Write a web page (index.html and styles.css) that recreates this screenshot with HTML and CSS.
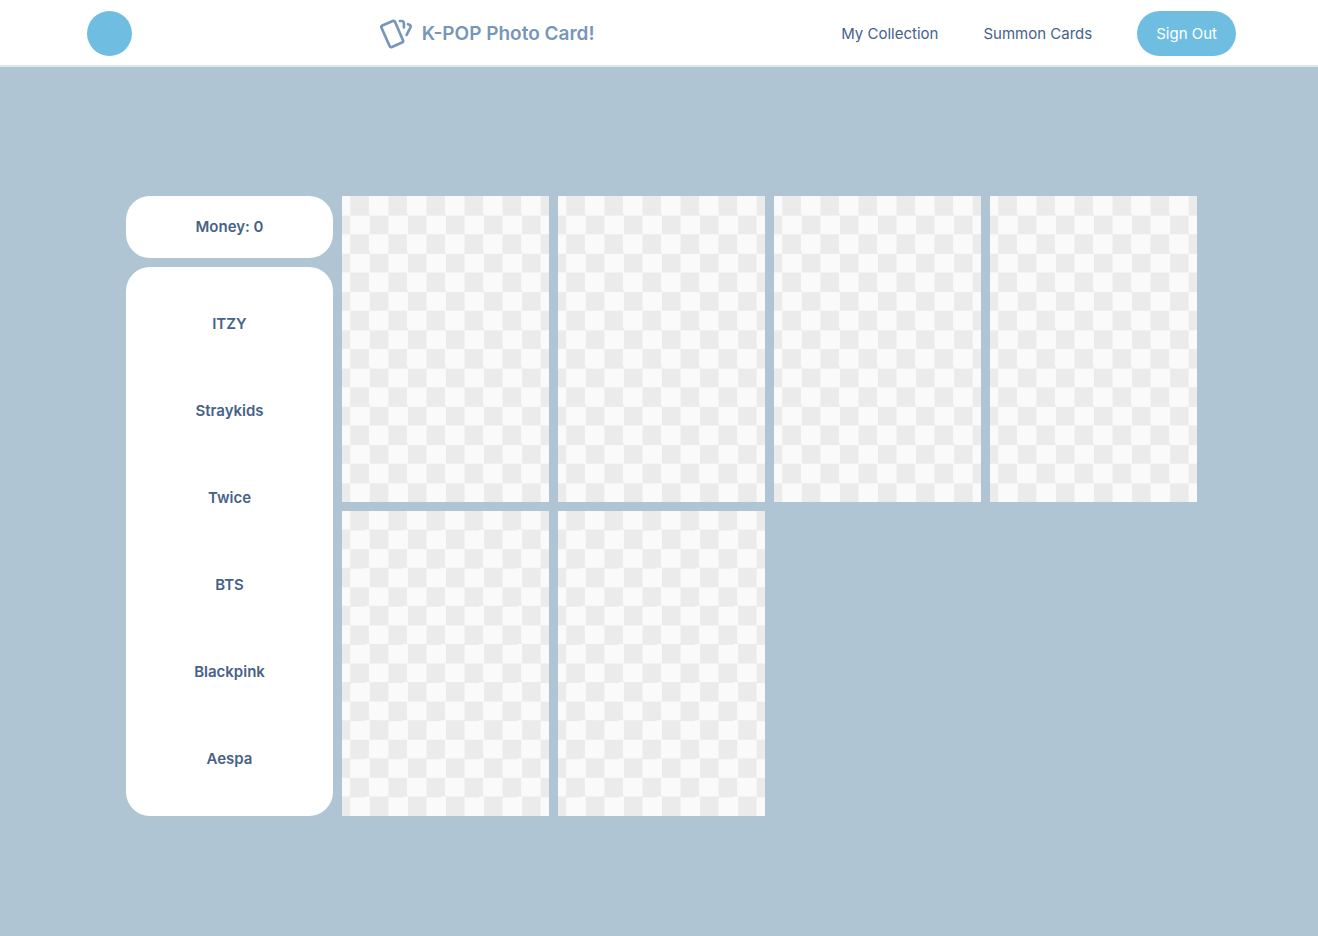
FILE: index.html
```html
<!DOCTYPE html>
<html lang="en">
<head>
<meta charset="utf-8">
<meta name="viewport" content="width=device-width, initial-scale=1">
<title>K-POP Photo Card!</title>
<link rel="stylesheet" href="styles.css">
</head>
<body>
<header class="header">
  <div class="avatar"></div>
  <a class="brand" href="#">
    <svg class="brand-icon" viewBox="0 0 34 32" aria-hidden="true">
      <path d="M3.4 7.4 L13.8 3 Q15.4 2.4 16.1 4 L24 22.3 Q24.6 23.9 23 24.6 L12.9 29 Q11.3 29.6 10.6 28 L2.5 9.7 Q1.8 8.1 3.4 7.4 Z"/>
      <path d="M20.9 3 H22.4 Q24.9 3 24.9 5.5 V9.4"/>
      <path d="M29 6.2 L30.2 6.7 Q32.3 7.6 31.4 9.5 L27.6 16.8"/>
    </svg>
    <span>K-POP Photo Card!</span>
  </a>
  <nav class="nav">
    <a class="nav-link" href="#">My Collection</a>
    <a class="nav-link" href="#">Summon Cards</a>
    <button class="sign-out" type="button">Sign Out</button>
  </nav>
</header>
<main class="collection">
  <aside class="sidebar">
    <div class="panel money">Money: 0</div>
    <div class="panel groups">
      <button class="group" type="button">ITZY</button>
      <button class="group" type="button">Straykids</button>
      <button class="group" type="button">Twice</button>
      <button class="group" type="button">BTS</button>
      <button class="group" type="button">Blackpink</button>
      <button class="group" type="button">Aespa</button>
    </div>
  </aside>
  <section class="cards">
    <div class="card"></div>
    <div class="card"></div>
    <div class="card"></div>
    <div class="card"></div>
    <div class="card"></div>
    <div class="card"></div>
  </section>
</main>
</body>
</html>
```
FILE: styles.css
```css
* {
  box-sizing: border-box;
}

body {
  margin: 0;
  min-height: 100vh;
  background: #b0c5d3;
  color: #466289;
  font-family: Inter, "Open Sans", sans-serif;
  font-size: 15px;
  line-height: 20px;
}

button {
  border: 0;
  padding: 0;
  background: none;
  color: inherit;
  font: inherit;
  cursor: pointer;
}

a {
  color: inherit;
  text-decoration: none;
}

.header {
  display: flex;
  align-items: center;
  justify-content: space-between;
  padding: 11px 82px 9px 87px;
  border-bottom: 2px solid #dfe6ed;
  background: #fff;
}

.avatar {
  width: 45px;
  height: 45px;
  border-radius: 50%;
  background: #6fbee2;
}

.brand {
  display: flex;
  align-items: center;
  gap: 9px;
  color: #7896b9;
  font-size: 19px;
  font-weight: 600;
}

.brand-icon {
  width: 34px;
  height: 32px;
  fill: none;
  stroke: currentColor;
  stroke-width: 2.7;
  stroke-linecap: round;
  stroke-linejoin: round;
}

.nav {
  display: flex;
  align-items: center;
  gap: 45px;
}

.sign-out {
  height: 45px;
  padding: 0 19px;
  border-radius: 23px;
  background: #6fbee2;
  color: #fff;
}

.collection {
  display: grid;
  grid-template-columns: calc((100% - 36px) / 5) minmax(0, 1fr);
  gap: 9px;
  padding: 129px 121px 120px 126px;
}

.sidebar {
  display: flex;
  flex-direction: column;
  gap: 9px;
  font-weight: 600;
}

.panel {
  border-radius: 24px;
  background: #fff;
}

.money {
  padding: 21px;
  text-align: center;
}

.groups {
  display: flex;
  flex: 1;
  flex-direction: column;
  padding: 13px;
}

.group {
  flex: 1;
}

.cards {
  display: grid;
  grid-template-columns: repeat(4, minmax(0, 1fr));
  gap: 9px;
}

.card {
  aspect-ratio: 414 / 611;
  background: repeating-conic-gradient(#fafafa 0 25%, #ebebeb 0 50%) center top / 18.4% 12.5%;
}
```
